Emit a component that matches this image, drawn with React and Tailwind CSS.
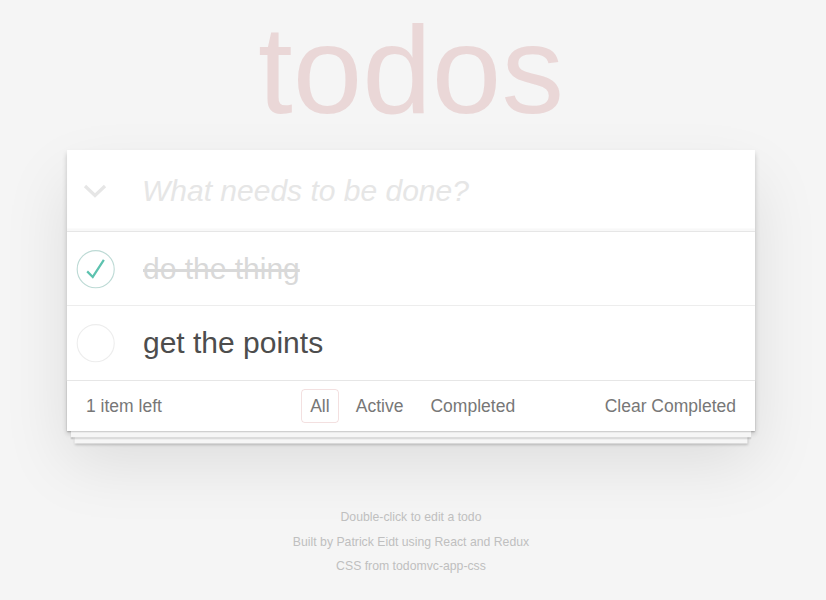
import React, { useState } from 'react';

const font = { fontFamily: '"Liberation Sans", Arial, sans-serif' };

const Toggle = ({ done }) => (
    <svg width="50" height="50" viewBox="-10 -18 100 135" className="shrink-0">
        <circle cx="50" cy="50" r="50" fill="none" stroke={done ? '#bddad5' : '#ededed'} strokeWidth="3" />
        {done && <path fill="none" stroke="#5dc2af" strokeWidth="6" d="M72 25L42 71 27 56" />}
    </svg>
);

const App = () => {
    const [todos] = useState([
        { id: 1, text: 'do the thing', completed: true },
        { id: 2, text: 'get the points', completed: false },
    ]);

    return (
        <div className="min-h-screen bg-[#f5f5f5] text-[#4d4d4d]" style={font}>
            <div className="w-[688px] ml-[67px]">
                {/* Title */}
                <h1 className="h-[150px] pt-[7px] text-center text-[125px] leading-[125px] font-normal text-[rgba(175,47,47,0.15)]">
                    todos
                </h1>

                <section className="bg-white shadow-[0_2.5px_5px_0_rgba(0,0,0,0.2),0_31px_62px_0_rgba(0,0,0,0.1)]">
                    {/* New todo input */}
                    <header className="h-[81px] flex items-center shadow-[inset_0_-2.5px_1.25px_rgba(0,0,0,0.03)]">
                        <div className="w-[56px] flex justify-center">
                            <svg width="24" height="14" viewBox="0 0 24 14">
                                <polyline points="2,2 12,11.5 22,2" fill="none" stroke="#e6e6e6" strokeWidth="3.2" />
                            </svg>
                        </div>
                        <input
                            className="flex-1 h-full ml-[19px] pr-5 bg-transparent outline-none text-[30px] placeholder:italic placeholder:text-[#e6e6e6]"
                            placeholder="What needs to be done?"
                        />
                    </header>

                    {/* Todo list */}
                    <ul className="border-t border-[#e6e6e6]">
                        {todos.map((t, i) => (
                            <li
                                key={t.id}
                                className={`h-[74px] flex items-center ${i < todos.length - 1 ? 'border-b border-[#ededed]' : ''}`}
                            >
                                <Toggle done={t.completed} />
                                <span
                                    className={`ml-[26px] text-[30px] leading-[36px] ${t.completed ? 'text-[#d9d9d9] line-through' : 'text-[#4d4d4d]'}`}
                                >
                                    {t.text}
                                </span>
                            </li>
                        ))}
                    </ul>

                    {/* Footer */}
                    <footer className="h-[51px] px-[19px] border-t border-[#e6e6e6] grid grid-cols-[1fr_auto_1fr] items-center text-[17.5px] leading-[25px] text-[#777] shadow-[0_1.25px_1.25px_rgba(0,0,0,0.2),0_10px_0_-3.75px_#f6f6f6,0_11.25px_1.25px_-3.75px_rgba(0,0,0,0.2),0_20px_0_-7.5px_#f6f6f6,0_21.25px_2.5px_-7.5px_rgba(0,0,0,0.2)]">
                        <span>1 item left</span>
                        <ul className="flex ml-[4px]">
                            <li><a className="block mx-[3.75px] px-[8px] py-[3.75px] border border-[rgba(175,47,47,0.15)] rounded-[3.75px]">All</a></li>
                            <li><a className="block mx-[3.75px] px-[8.75px] py-[3.75px] border border-transparent rounded-[3.75px]">Active</a></li>
                            <li><a className="block mx-[3.75px] px-[8.75px] py-[3.75px] border border-transparent rounded-[3.75px]">Completed</a></li>
                        </ul>
                        <button className="justify-self-end text-[#777]">Clear Completed</button>
                    </footer>
                </section>

                {/* Info */}
                <div className="mt-[80px] flex flex-col gap-[12px] text-center text-[12.25px] leading-[12.5px] text-[#bfbfbf]">
                    <p>Double-click to edit a todo</p>
                    <p>Built by Patrick Eidt using React and Redux</p>
                    <p>CSS from todomvc-app-css</p>
                </div>
            </div>
        </div>
    );
};

export default App;
